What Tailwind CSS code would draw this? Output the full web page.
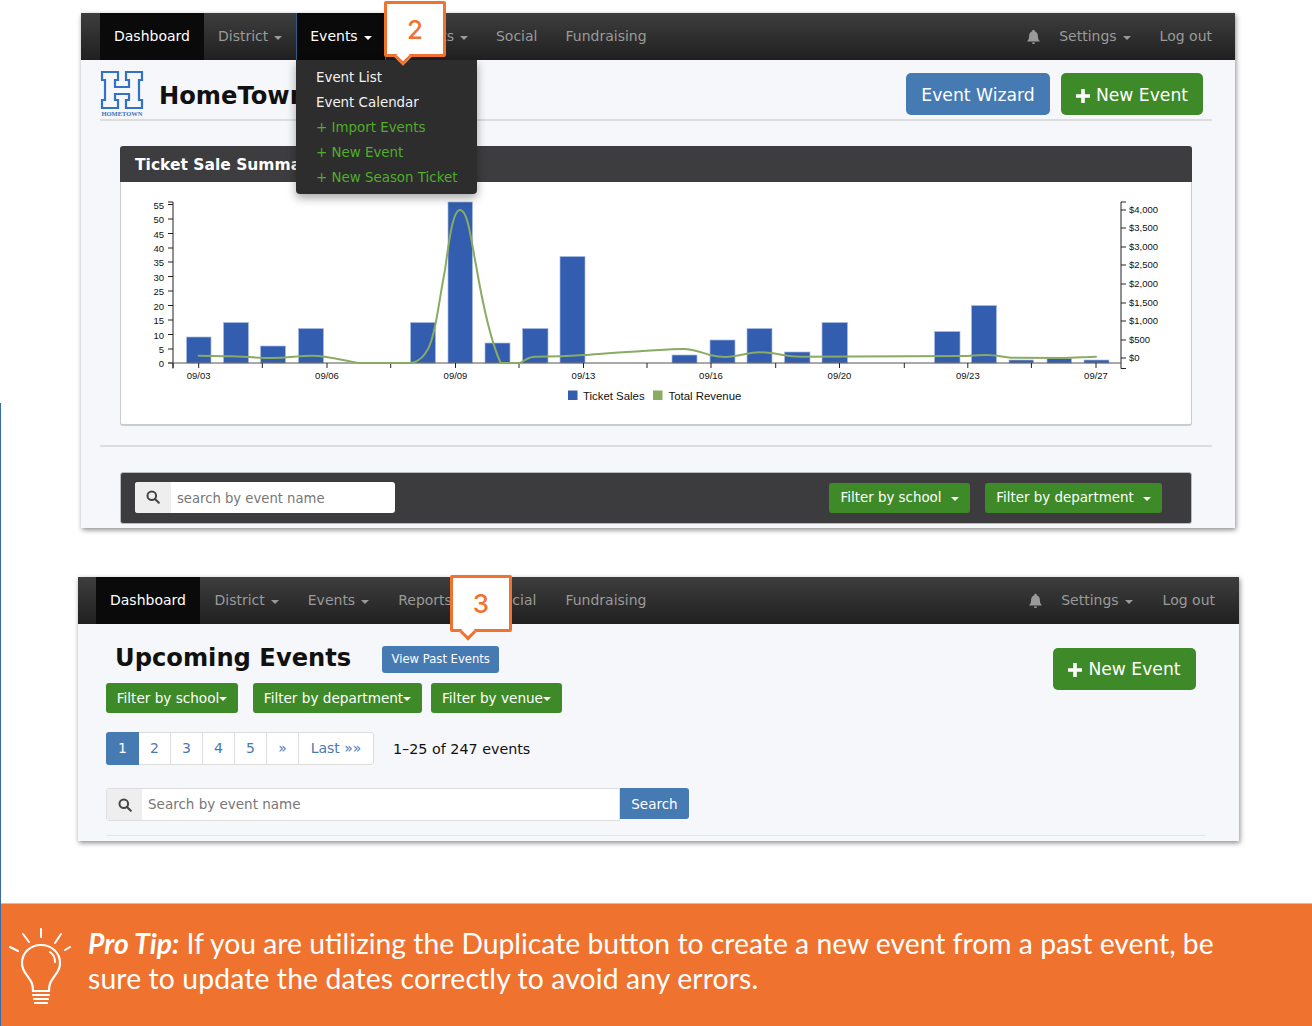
<!DOCTYPE html>
<html>
<head>
<meta charset="UTF-8" />
<title>Event dashboard help</title>
<script src="https://cdn.jsdelivr.net/npm/@tailwindcss/browser@4"></script>
</head>
<body class="bg-white font-['DejaVu_Sans',sans-serif] text-[14px]">
<div class="relative w-[1312px] h-[1026px] overflow-hidden flex flex-col items-start pt-[13px]">

    <!-- first screenshot card -->
    <section class="ml-[81px] w-[1154px] h-[515px] bg-[#f6f7fa] shadow-[1px_2px_5px_rgba(0,0,0,0.45)] flex flex-col">
        <nav class="h-[47px] shrink-0 flex pl-[19px] pr-[9px] bg-linear-to-b from-[#3e3e3e] to-[#202020] text-[#9a9a9a]">
            <a class="bg-[#0a0a0a] text-white px-[14px] flex items-center">Dashboard</a>
            <a class="px-[14px] flex items-center">District<i class="ml-[6px] mt-[2px] border-x-[4px] border-t-[4px] border-x-transparent border-t-[#9a9a9a]"></i></a>
            <a class="bg-[#0a0a0a] text-white pl-[13px] w-[90px] flex items-center border-x border-[#2f5d86]">Events<i class="ml-[6px] mt-[2px] border-x-[4px] border-t-[4px] border-x-transparent border-t-white"></i></a>
            <a class="px-[14px] flex items-center">Reports<i class="ml-[6px] mt-[2px] border-x-[4px] border-t-[4px] border-x-transparent border-t-[#9a9a9a]"></i></a>
            <a class="px-[14px] flex items-center">Social</a>
            <a class="px-[14px] flex items-center">Fundraising</a>
            <div class="ml-auto flex items-center">
                <svg class="w-[15px] h-[15px] mr-[4px]" viewBox="0 0 24 24" fill="#9a9a9a"><path d="M12 1a2 2 0 0 0-2 2v.6C6.8 4.5 5 7.3 5 11c0 4.500-1.300 6.500-3 8v1h20v-1c-1.700-1.500-3-3.500-3-8 0-3.700-1.800-6.500-5-7.400V3a2 2 0 0 0-2-2zM9.500 21.500a2.500 2.500 0 0 0 5 0z"/></svg>
                <a class="pl-[14px] pr-[15px] flex items-center">Settings<i class="ml-[6px] mt-[2px] border-x-[4px] border-t-[4px] border-x-transparent border-t-[#9a9a9a]"></i></a>
                <a class="px-[14px] flex items-center">Log out</a>
            </div>
        </nav>

        <header class="ml-[19px] mr-[23px] h-[61px] shrink-0 border-b-2 border-[#ddd] flex items-center">
            <div class="flex flex-col items-center w-[44px] mt-[9px]">
                <svg class="w-[44px] h-[40px]" viewBox="0 0 44 40" fill="#f6f7fa" stroke="#3272c4" stroke-width="2.200"><path d="M2 2h16v8h-3v7h14v-7h-3V2h16v8h-3v20h3v8H26v-8h3v-6H15v6h3v8H2v-8h3V10H2z"/></svg>
                <span class="font-['Liberation_Serif',serif] font-bold text-[6.500px] leading-[8px] text-[#3272c4]">HOMETOWN</span>
            </div>
            <h1 class="ml-[15px] mt-[14px] text-[24.200px] font-bold text-[#111] whitespace-nowrap">HomeTown Events</h1>
            <a class="ml-auto mr-[11px] w-[144px] h-[42px] mt-[9px] pt-[3px] rounded-[5px] bg-[#467ab3] text-white text-[17.200px] flex items-center justify-center">Event Wizard</a>
            <a class="mr-[9px] w-[142px] h-[42px] mt-[9px] pt-[3px] rounded-[5px] bg-[#3e8a29] text-white text-[17.200px] flex items-center justify-center gap-[6px]">
                <svg class="w-[14px] h-[14px]" viewBox="0 0 14 14" fill="#fff"><path d="M5.200 0h3.600v5.200H14v3.600H8.800V14H5.200V8.800H0V5.200h5.200z"/></svg>
                New Event
            </a>
        </header>

        <div class="ml-[39px] mt-[25px] w-[1072px] shrink-0 flex flex-col">
            <h2 class="h-[36px] rounded-t-[3px] bg-[#3d3d3f] pl-[15px] pt-[4px] text-white font-bold text-[15.500px] flex items-center">Ticket Sale Summary</h2>
            <div class="h-[244px] rounded-b-[3px] border-x border-b-2 border-[#ccc] bg-white">
                <svg class="block w-[1070px] h-[242px] font-['Liberation_Sans',sans-serif] text-[9.500px]" viewBox="121 182 1070 242" fill="#111">
                    <!-- ticket sales bars -->
                    <g fill="#335dae" stroke="#a9bde3" stroke-width="0.700">
                        <rect x="186.500" y="337" width="24.500" height="26"/>
                        <rect x="223.500" y="322.500" width="25" height="40.500"/>
                        <rect x="260.500" y="346" width="25" height="17"/>
                        <rect x="298.500" y="328.500" width="25" height="34.500"/>
                        <rect x="410.500" y="322.500" width="25" height="40.500"/>
                        <rect x="448" y="202" width="24.500" height="161"/>
                        <rect x="485" y="343" width="25" height="20"/>
                        <rect x="522.500" y="328.500" width="25.500" height="34.500"/>
                        <rect x="560" y="256.500" width="25" height="106.500"/>
                        <rect x="672" y="355" width="25" height="8"/>
                        <rect x="710" y="340" width="25" height="23"/>
                        <rect x="747" y="328.500" width="25" height="34.500"/>
                        <rect x="784.500" y="352" width="25.500" height="11"/>
                        <rect x="822" y="322.500" width="25.500" height="40.500"/>
                        <rect x="934.500" y="331.500" width="25.500" height="31.500"/>
                        <rect x="971.500" y="305.500" width="25" height="57.500"/>
                        <rect x="1009" y="360" width="24.500" height="3"/>
                        <rect x="1047" y="358.500" width="24.500" height="4.500"/>
                        <rect x="1084" y="360" width="25" height="3"/>
                    </g>
                    <!-- axes -->
                    <g stroke="#222" stroke-width="1" fill="none">
                        <path d="M168 202h5V368.500M168 204.500h5M168 219h5M168 233.500h5M168 248h5M168 262h5M168 276.500h5M168 291h5M168 305.500h5M168 320h5M168 334.500h5M168 349h5M168 363h5"/>
                        <path d="M1126 202h-5V368.500h5M1121 210h5M1121 228h5M1121 247h5M1121 265h5M1121 284h5M1121 303h5M1121 321h5M1121 340h5M1121 358h5"/>
                        <path stroke="#555" d="M168 363H1121"/>
                        <path d="M173 363v5M198.700 363v5M262.300 363v5M327 363v5M390.700 363v5M455.500 363v5M519 363v5M583.500 363v5M647 363v5M711 363v5M775.700 363v5M839.500 363v5M904.300 363v5M967.800 363v5M1031.400 363v5M1096 363v5"/>
                    </g>
                    <!-- total revenue line -->
                    <path fill="none" stroke="#8aab62" stroke-width="2" stroke-linecap="round" d="M198.700 355.700C212 356 222 356 233 356.300C248 356.800 258 358 273 358C288 358 298 355.700 311.700 355.700C328 355.700 342 360 358 363L411.700 363C420 361 424 356 428 349C436 333 439 300 445 270C449 240 453 210 460 210C468 210 471 240 476 265C482 300 490 340 500.700 363L520 363C526 360 528 356.700 535 356.700C555 356.700 570 356 583 355C605 353.500 620 352.300 640 351.300C655 350.500 670 349 683 349C695 349 702 353 710 355C716 356.500 720 357 725.700 357C738 357 748 352.300 759.600 352.300C775 352.300 785 356.700 800.700 356.700L961 356C970 356 978 355 986.400 355C995 355 1003 357 1011 357.700L1061 358C1072 358 1085 357 1096 356.700"/>
                    <!-- labels -->
                    <g text-anchor="end">
                        <text x="164" y="208.500">55</text><text x="164" y="222.500">50</text><text x="164" y="237.500">45</text><text x="164" y="251.500">40</text><text x="164" y="265.500">35</text><text x="164" y="280.500">30</text><text x="164" y="294.500">25</text><text x="164" y="309.500">20</text><text x="164" y="323.500">15</text><text x="164" y="338.500">10</text><text x="164" y="352.500">5</text><text x="164" y="366.500">0</text>
                    </g>
                    <g text-anchor="middle">
                        <text x="198.700" y="378.500">09/03</text><text x="327" y="378.500">09/06</text><text x="455.500" y="378.500">09/09</text><text x="583.500" y="378.500">09/13</text><text x="711" y="378.500">09/16</text><text x="839.500" y="378.500">09/20</text><text x="967.800" y="378.500">09/23</text><text x="1096" y="378.500">09/27</text>
                    </g>
                    <g>
                        <text x="1129" y="212.500">$4,000</text><text x="1129" y="230.500">$3,500</text><text x="1129" y="249.500">$3,000</text><text x="1129" y="267.500">$2,500</text><text x="1129" y="286.500">$2,000</text><text x="1129" y="305.500">$1,500</text><text x="1129" y="323.500">$1,000</text><text x="1129" y="342.500">$500</text><text x="1129" y="360.500">$0</text>
                    </g>
                    <!-- legend -->
                    <rect x="568" y="390.500" width="9.500" height="9.500" fill="#335dae"/>
                    <text x="583" y="399.500" font-size="11.400">Ticket Sales</text>
                    <rect x="653" y="390.500" width="9.500" height="9.500" fill="#8aab62"/>
                    <text x="668.500" y="399.500" font-size="11.400">Total Revenue</text>
                </svg>
            </div>
        </div>

        <div class="ml-[19px] mr-[23px] mt-[19px] h-[2px] shrink-0 bg-[#ddd]"></div>

        <div class="ml-[39px] mt-[25px] w-[1072px] h-[52px] shrink-0 rounded-[3px] bg-[#3c3c3e] border border-[#bbb] flex items-center pl-[14px] pr-[29px]">
            <div class="w-[260px] h-[31px] mb-[2px] rounded-[3px] bg-white flex overflow-hidden">
                <span class="w-[36px] shrink-0 bg-[#eee] flex items-center justify-center">
                    <svg class="w-[14px] h-[14px]" viewBox="0 0 14 14" fill="none" stroke="#444" stroke-width="2"><circle cx="5.800" cy="5.800" r="4.300"/><path stroke-linecap="round" d="M9 9l3.800 3.800"/></svg>
                </span>
                <span class="pl-[6px] pt-[3px] text-[#777] text-[13.200px] flex items-center">search by event name</span>
            </div>
            <a class="ml-auto w-[141px] h-[30px] rounded-[3px] bg-[#3e8a29] text-white text-[13.400px] flex items-center justify-center">Filter by school<i class="ml-[9px] mt-[2px] border-x-[4px] border-t-[4px] border-x-transparent border-t-white"></i></a>
            <a class="ml-[15px] w-[177px] h-[30px] rounded-[3px] bg-[#3e8a29] text-white text-[13.400px] flex items-center justify-center">Filter by department<i class="ml-[9px] mt-[2px] border-x-[4px] border-t-[4px] border-x-transparent border-t-white"></i></a>
        </div>
    </section>

    <!-- second screenshot card -->
    <section class="ml-[78px] mt-[49px] w-[1161px] h-[264px] bg-[#f6f7fa] shadow-[1px_2px_5px_rgba(0,0,0,0.45)] flex flex-col">
        <nav class="h-[47px] shrink-0 flex pl-[18px] pr-[10px] bg-linear-to-b from-[#3e3e3e] to-[#202020] text-[#9a9a9a]">
            <a class="bg-[#0a0a0a] text-white px-[14px] flex items-center">Dashboard</a>
            <a class="px-[14.500px] flex items-center">District<i class="ml-[6px] mt-[2px] border-x-[4px] border-t-[4px] border-x-transparent border-t-[#9a9a9a]"></i></a>
            <a class="px-[14.500px] flex items-center">Events<i class="ml-[6px] mt-[2px] border-x-[4px] border-t-[4px] border-x-transparent border-t-[#9a9a9a]"></i></a>
            <a class="px-[14.500px] flex items-center">Reports<i class="ml-[6px] mt-[2px] border-x-[4px] border-t-[4px] border-x-transparent border-t-[#9a9a9a]"></i></a>
            <a class="px-[14.500px] flex items-center">Social</a>
            <a class="px-[14.500px] flex items-center">Fundraising</a>
            <div class="ml-auto flex items-center">
                <svg class="w-[15px] h-[15px] mr-[4px]" viewBox="0 0 24 24" fill="#9a9a9a"><path d="M12 1a2 2 0 0 0-2 2v.6C6.8 4.5 5 7.3 5 11c0 4.500-1.300 6.500-3 8v1h20v-1c-1.700-1.500-3-3.500-3-8 0-3.700-1.800-6.500-5-7.400V3a2 2 0 0 0-2-2zM9.500 21.500a2.500 2.500 0 0 0 5 0z"/></svg>
                <a class="pl-[14px] pr-[16px] flex items-center">Settings<i class="ml-[6px] mt-[2px] border-x-[4px] border-t-[4px] border-x-transparent border-t-[#9a9a9a]"></i></a>
                <a class="px-[14px] flex items-center">Log out</a>
            </div>
        </nav>

        <div class="relative flex-1 pl-[28px] pr-[33px] flex flex-col">
            <div class="flex items-center h-[26px] mt-[21px] pl-[9px]">
                <h1 class="text-[24.200px] font-bold text-[#111]">Upcoming Events</h1>
                <a class="ml-[31px] mt-[2px] w-[117px] h-[27px] pt-[1px] rounded-[3px] bg-[#467ab3] text-white text-[11.600px] flex items-center justify-center">View Past Events</a>
                <a class="absolute right-[43px] top-[24px] w-[143px] h-[42px] pt-[2px] rounded-[5px] bg-[#3e8a29] text-white text-[17.200px] flex items-center justify-center gap-[6px]">
                    <svg class="w-[14px] h-[14px]" viewBox="0 0 14 14" fill="#fff"><path d="M5.200 0h3.600v5.200H14v3.600H8.800V14H5.200V8.800H0V5.200h5.200z"/></svg>
                    New Event
                </a>
            </div>
            <div class="flex mt-[12px] h-[30px] text-white text-[13.600px]">
                <a class="w-[132px] rounded-[3px] bg-[#3e8a29] flex items-center justify-center">Filter by school<i class="mt-[2px] border-x-[4px] border-t-[4px] border-x-transparent border-t-white"></i></a>
                <a class="ml-[15px] w-[169px] rounded-[3px] bg-[#3e8a29] flex items-center justify-center">Filter by department<i class="mt-[2px] border-x-[4px] border-t-[4px] border-x-transparent border-t-white"></i></a>
                <a class="ml-[9px] w-[131px] rounded-[3px] bg-[#3e8a29] flex items-center justify-center">Filter by venue<i class="mt-[2px] border-x-[4px] border-t-[4px] border-x-transparent border-t-white"></i></a>
            </div>
            <div class="flex items-center mt-[19px] h-[33px]">
                <div class="flex h-full w-[268px] rounded-[3px] border border-[#ddd] bg-white text-[#467ab3]">
                    <span class="-ml-px -my-px w-[33px] rounded-l-[3px] bg-[#467ab3] text-white flex items-center justify-center">1</span>
                    <span class="w-[32px] border-r border-[#ddd] flex items-center justify-center">2</span>
                    <span class="w-[32px] border-r border-[#ddd] flex items-center justify-center">3</span>
                    <span class="w-[32px] border-r border-[#ddd] flex items-center justify-center">4</span>
                    <span class="w-[32px] border-r border-[#ddd] flex items-center justify-center">5</span>
                    <span class="w-[32px] border-r border-[#ddd] flex items-center justify-center">»</span>
                    <span class="flex-1 flex items-center justify-center">Last »»</span>
                </div>
                <span class="ml-[19px] mt-[2px] text-[14.300px] text-[#111]">1–25 of 247 events</span>
            </div>
            <div class="flex mt-[23px] h-[33px] w-[583px] items-start">
                <div class="flex-1 h-[33px] flex rounded-l-[3px] border border-[#ddd] bg-white overflow-hidden">
                    <span class="w-[35px] shrink-0 bg-[#eee] flex items-center justify-center">
                        <svg class="w-[14px] h-[14px]" viewBox="0 0 14 14" fill="none" stroke="#444" stroke-width="2"><circle cx="5.800" cy="5.800" r="4.300"/><path stroke-linecap="round" d="M9 9l3.800 3.800"/></svg>
                    </span>
                    <span class="pl-[6px] text-[#777] text-[13.500px] flex items-center">Search by event name</span>
                </div>
                <a class="w-[69px] h-[31px] rounded-r-[3px] bg-[#467ab3] text-white text-[13.500px] pt-[1px] flex items-center justify-center">Search</a>
            </div>
            <div class="mt-[14px] h-px bg-[#e4e4e4]"></div>
        </div>
    </section>

    <!-- pro tip banner -->
    <footer class="absolute left-0 top-[903px] w-full h-[123px] bg-[#f0722f] border-t border-[#e9b89c] flex font-['Lato',sans-serif] text-white text-[28.300px] leading-[35px]">
        <svg class="ml-[8px] mt-[24px] w-[64px] h-[76px] shrink-0" viewBox="0 0 64 76" fill="none" stroke="#fff" stroke-width="2" stroke-linecap="round">
            <path d="M33 1v8M15 6l6 8M53 6l-6 9M2 19l8 4M62 19l-5 3"/>
            <path stroke-width="2.200" d="M25 63c0-9-3-11-7-17-3-4-4-8-4-11 0-10 8-18 19-18s19 8 19 18c0 3-1 7-4 11-4 6-7 8-7 17z"/>
            <path d="M42 24c3 2 5 6 5 10" />
            <path stroke-width="2.200" d="M25 67h16M26 71h14M27 75h12"/>
        </svg>
        <p class="ml-[16px] mt-[22px] whitespace-nowrap"><b class="italic font-bold">Pro Tip:</b> If you are utilizing the Duplicate button to create a new event from a past event, be<br><span class="tracking-[0.13px]">sure to update the dates correctly to avoid any errors.</span></p>
    </footer>

    <!-- blue edge of the page behind -->
    <div class="absolute left-0 top-[403px] bottom-0 w-px bg-[#3a6aa8]"></div>

    <!-- events dropdown, open over the first card -->
    <div class="absolute left-[296px] top-[60px] w-[181px] h-[134px] pt-[5px] rounded-b-[4px] bg-[#2d2d2d] shadow-[0_4px_10px_rgba(0,0,0,0.35)] pl-[20px] text-[13.400px] leading-[25px] text-[#f2f2f2]">
        <div>Event List</div>
        <div>Event Calendar</div>
        <div class="text-[#4fae2b]">+ Import Events</div>
        <div class="text-[#4fae2b]">+ New Event</div>
        <div class="text-[#4fae2b]">+ New Season Ticket</div>
    </div>

    <!-- numbered callouts -->
    <div class="absolute left-[384px] top-[1px] w-[62px] h-[56px] bg-white border-[3px] border-[#f0722f] rounded-[2px] flex items-center justify-center font-['Inter',sans-serif] font-medium text-[26px] text-[#f0722f]">
        2
        <i class="absolute left-[10px] -bottom-[9px] w-[12px] h-[12px] rotate-45 bg-white border-r-[3px] border-b-[3px] border-[#f0722f]"></i>
    </div>
    <div class="absolute left-[450px] top-[575px] w-[62px] h-[57px] bg-white border-[3px] border-[#f0722f] rounded-[2px] flex items-center justify-center font-['Inter',sans-serif] font-medium text-[26px] text-[#f0722f]">
        3
        <i class="absolute left-[9px] -bottom-[9px] w-[12px] h-[12px] rotate-45 bg-white border-r-[3px] border-b-[3px] border-[#f0722f]"></i>
    </div>
</div>
</body>
</html>
